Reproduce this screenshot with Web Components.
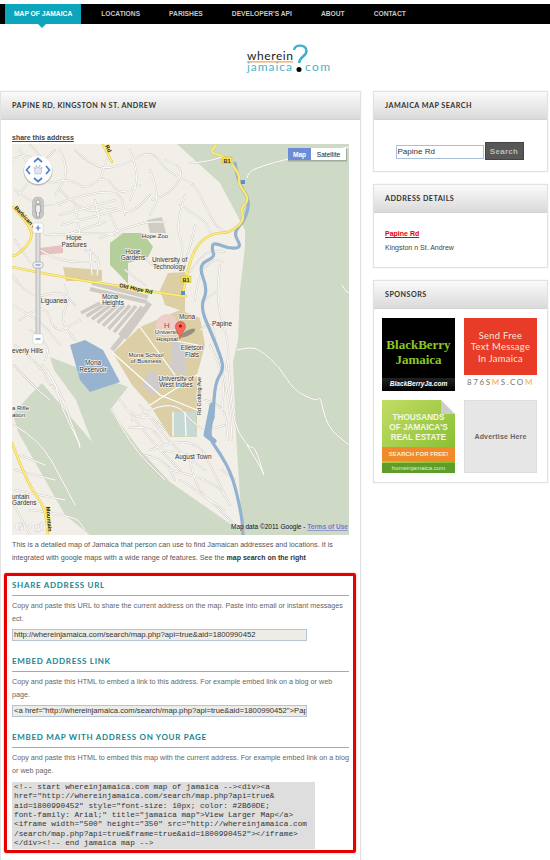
<!DOCTYPE html>
<html>
<head>
<meta charset="utf-8">
<title>Where in Jamaica</title>
<style>
html, body { margin:0; padding:0; background:#fff; }
body { font-family:"Liberation Sans", Arial, sans-serif; width:550px; height:860px; overflow:hidden; }
.columns { display:grid; grid-template-columns:361px 175px; column-gap:12px; align-items:start; margin-top:18px; }
.side { display:flex; flex-direction:column; gap:12px; }
</style>
</head>
<body>
<wj-nav></wj-nav>
<wj-logo></wj-logo>
<div class="columns">
  <wj-panel>
    <span slot="title">PAPINE RD, KINGSTON N ST. ANDREW</span>
    <wj-address></wj-address>
  </wj-panel>
  <div class="side">
    <wj-panel><span slot="title">JAMAICA MAP SEARCH</span><wj-search></wj-search></wj-panel>
    <wj-panel><span slot="title">ADDRESS DETAILS</span><wj-details></wj-details></wj-panel>
    <wj-panel><span slot="title">SPONSORS</span><wj-sponsors></wj-sponsors></wj-panel>
  </div>
</div>

<script>
const navTemplate = document.createElement('template')
navTemplate.innerHTML = `
<style>
:host { display:block; margin-top:4px; height:20px; background:#000; padding-left:5px; position:relative; }
nav { display:flex; gap:11px; height:20px; }
a { display:flex; align-items:center; padding:0 9px; color:#c9c9c9; font:bold 6.7px/20px "Liberation Sans", Arial, sans-serif; white-space:nowrap; text-decoration:none; }
a.on { background:#0ca5bb; color:#fff; position:relative; }
a.on::after { content:""; position:absolute; left:33px; top:20px; border:4px solid transparent; border-top-color:#0ca5bb; border-bottom:0; }
</style>
<nav>
<a class="on" href="#">MAP OF JAMAICA</a>
<a href="#">LOCATIONS</a>
<a href="#">PARISHES</a>
<a href="#">DEVELOPER'S API</a>
<a href="#">ABOUT</a>
<a href="#">CONTACT</a>
</nav>
`
customElements.define('wj-nav', class extends HTMLElement {
    constructor() {
        super()
        this.attachShadow({ mode: 'open' }).appendChild(navTemplate.content.cloneNode(true))
    }
})

const logoTemplate = document.createElement('template')
logoTemplate.innerHTML = `
<style>
:host { display:flex; padding:21px 0 0 247px; height:28px; }
svg { display:block; width:84px; height:30px; overflow:visible; }
text { font-family:Lato, "Liberation Sans", sans-serif; }
</style>
<svg viewBox="0 0 84 30">
  <text x="0" y="15" font-size="12" fill="#222" textLength="46">wherein</text>
  <rect x="0" y="16.4" width="46" height="1" fill="#f08a2c"/>
  <text x="0" y="25.500" font-size="12" fill="#4eb3c6" textLength="45">jamaica</text>
  <text x="58" y="25.500" font-size="12" fill="#4eb3c6" textLength="25">com</text>
  <path d="M47 5 C48 -1 59 -1 59.500 6 C59.800 11 52.500 11.500 52 18" fill="none" stroke="#3fb0c8" stroke-width="2.400"/>
  <circle cx="52" cy="24.500" r="2.500" fill="#000"/>
</svg>
`
customElements.define('wj-logo', class extends HTMLElement {
    constructor() {
        super()
        this.attachShadow({ mode: 'open' }).appendChild(logoTemplate.content.cloneNode(true))
    }
})

const panelTemplate = document.createElement('template')
panelTemplate.innerHTML = `
<style>
:host { display:block; border:1px solid #e2e2e2; box-shadow:0 0 1px #ddd; background:#fff; }
header { height:27px; padding-left:11px; display:flex; align-items:center; background:linear-gradient(#fafafa,#dadada); border-bottom:1px solid #d2d2d2;
  font:bold 7.2px Lato, "Liberation Sans", sans-serif; letter-spacing:.45px; color:#333; }
</style>
<header><slot name="title"></slot></header>
<slot></slot>
`
customElements.define('wj-panel', class extends HTMLElement {
    constructor() {
        super()
        this.attachShadow({ mode: 'open' }).appendChild(panelTemplate.content.cloneNode(true))
    }
})

const addressTemplate = document.createElement('template')
addressTemplate.innerHTML = `
<style>
:host { display:block; padding:12px 11px 0; font:7.2px/13.4px "Liberation Sans", Arial, sans-serif; color:#555; height:760px; box-sizing:border-box; }
.share { display:block; font-weight:bold; font-size:7px; color:#444; text-decoration:underline; line-height:11px; height:12px; }
p { margin:3px 0 0; width:337px; height:35px; }
p b { color:#333; font-size:7px; }
.box { margin:0 -8px; border:3px solid #e70000; border-radius:2px; padding:4px 4px 0 5px; width:352px; height:280px; box-sizing:border-box; box-shadow:0 0 2px #f99; }
</style>
<a class="share">share this address</a>
<wj-map></wj-map>
<p>This is a detailed map of Jamaica that person can use to find Jamaican addresses and locations. It is integrated with google maps with a wide range of features. See the <b>map search on the right</b></p>
<div class="box">
<wj-copy heading="SHARE ADDRESS URL" text="Copy and paste this URL to share the current address on the map. Paste into email or instant messages ect." value="http://whereinjamaica.com/search/map.php?api=true&amp;aid=1800990452"></wj-copy>
<wj-copy heading="EMBED ADDRESS LINK" text="Copy and paste this HTML to embed a link to this address. For example embed link on a blog or web page." value='&lt;a href="http://whereinjamaica.com/search/map.php?api=true&amp;aid=1800990452"&gt;Papine Rd&lt;/a&gt;'></wj-copy>
<wj-copy heading="EMBED MAP WITH ADDRESS ON YOUR PAGE" text="Copy and paste this HTML to embed this map with the current address. For example embed link on a blog or web page." code='&lt;!-- start whereinjamaica.com map of jamaica --&gt;&lt;div&gt;&lt;a
href="http://whereinjamaica.com/search/map.php?api=true&amp;
aid=1800990452" style="font-size: 10px; color: #2B60DE;
font-family: Arial;" title="jamaica map"&gt;View Larger Map&lt;/a&gt;
&lt;iframe width="500" height="350" src="http://whereinjamaica.com
/search/map.php?api=true&amp;frame=true&amp;aid=1800990452"&gt;&lt;/iframe&gt;
&lt;/div&gt;&lt;!-- end jamaica map --&gt;'></wj-copy>
</div>
`
customElements.define('wj-address', class extends HTMLElement {
    constructor() {
        super()
        this.attachShadow({ mode: 'open' }).appendChild(addressTemplate.content.cloneNode(true))
    }
})

const copyTemplate = document.createElement('template')
copyTemplate.innerHTML = `
<style>
:host { display:block; font:7.2px/13.4px "Liberation Sans", Arial, sans-serif; color:#666; height:76px; }
:host(:last-child) { height:auto; }
h3 { margin:0; font:bold 8px/11px Lato, "Liberation Sans", sans-serif; letter-spacing:.7px; color:#17868f; padding-bottom:4px; border-bottom:1px solid #aaa; height:11px; }
p { margin:3px 0 0; width:338px; height:27px; }
.value { margin-top:3px; width:295px; height:12px; box-sizing:border-box; background:#eeece6; border:1px solid #b4c4d4; padding:0 1px; font:7.7px/10px "Liberation Sans", Arial, sans-serif; color:#333; white-space:nowrap; overflow:hidden; }
pre { margin:4px 0 0; width:303px; height:67px; box-sizing:border-box; background:#dedede; padding:1px 2px; font:7.75px/9.35px "Liberation Mono", monospace; color:#333; overflow:hidden; }
</style>
<h3></h3>
<p></p>
`
customElements.define('wj-copy', class extends HTMLElement {
    constructor() {
        super()
        this.attachShadow({ mode: 'open' }).appendChild(copyTemplate.content.cloneNode(true))
        this.shadowRoot.querySelector('h3').textContent = this.getAttribute('heading')
        this.shadowRoot.querySelector('p').textContent = this.getAttribute('text')
        if (this.hasAttribute('code')) {
            const pre = document.createElement('pre')
            pre.textContent = this.getAttribute('code')
            this.shadowRoot.append(pre)
        } else {
            const value = document.createElement('div')
            value.className = 'value'
            value.textContent = this.getAttribute('value')
            this.shadowRoot.append(value)
        }
    }
})

// polylines to rounded curves, the map numbers are page pixels
function smooth(list) {
    return list.map(line => line.trim().split(/\s+/).map(p => p.split(',').map(Number))).map(pts => {
        let d = `M${pts[0][0]} ${pts[0][1]}`
        for (let i = 1; i < pts.length - 1; i++) {
            const mx = (pts[i][0] + pts[i + 1][0]) / 2
            const my = (pts[i][1] + pts[i + 1][1]) / 2
            d += ` Q${pts[i][0]} ${pts[i][1]} ${mx} ${my}`
        }
        const last = pts[pts.length - 1]
        return d + ` L${last[0]} ${last[1]}`
    }).join(' ')
}

const roads = smooth([
 '12,160 25,152 40,165 55,150', '30,145 50,165 45,185 70,178 85,190 105,175 120,195 140,185',
 '60,190 85,215 110,205 130,215 150,195', '75,150 95,170 125,165 150,150 165,168 170,172 185,180 195,185 205,205 215,225 225,232',
 '55,205 80,195 120,190 125,215', '60,215 115,200', '62,225 118,210', '65,235 105,222', '45,235 100,232 115,235',
 '15,190 35,205 60,205', '15,240 30,262', '12,275 30,300 60,290 75,305', '20,320 45,300 55,335 80,320',
 '90,250 92,275', '85,250 100,255 97,275', '12,305 40,320 60,345', '15,345 40,365 50,385', '14,365 32,385 50,400',
 '100,238 140,222 165,222', '152,200 170,195 185,170 165,160', '180,205 205,220 210,232',
 '190,163 205,162 222,157', '247,178 248,172 262,166 287,159 320,152 349,147',
 '190,272 205,250 225,252', '195,300 198,275 215,258 222,262', '220,265 215,300 230,345 226,370',
 '205,300 218,290', '200,330 212,320 215,340', '237,350 250,347 260,350 280,367 293,390 318,402 320,395 327,427 349,445',
 '228,360 232,410 238,433 250,448 255,447 265,478 262,470 255,458 247,445', '342,285 347,293 349,292',
 '132,420 170,395 200,432 225,425', '112,410 130,445 165,480', '120,400 150,440 180,470', '140,405 170,445 205,470',
 '150,450 175,440 200,445 210,465 225,495', '170,470 215,480 230,505', '190,460 195,490 225,510', '222,470 235,480',
 '125,408 140,420 150,415 165,430', '130,428 150,425 165,445', '145,455 165,460 175,480', '160,450 190,455',
 '205,400 225,405 228,440', '210,345 225,375 222,410', '216,345 230,400 232,440', '180,480 205,495 235,525',
 '42,365 55,380 62,410 78,440 80,448', '47,370 62,395 70,420 80,445', '52,385 65,405',
 '14,425 40,440 62,480 75,505', '20,455 45,465', '15,470 55,480', '15,490 65,500', '30,510 75,515 85,530', '14,505 30,535',
 '20,150 35,175 18,195', '60,150 70,170 55,195', '130,150 140,175 130,200', '110,150 100,180', '150,170 160,195 150,215',
 '95,200 100,225', '75,205 80,235', '110,215 120,235', '40,250 60,262 95,262', '65,285 70,300 60,320 75,340',
 '30,330 50,345 45,360', '125,270 145,285', '140,255 160,270', '185,195 175,225 185,250 175,270', '195,225 190,250 180,272'
])
const casing = '#d2cec5'
const fan = []
for (let i = 0; i < 9; i++) {
    fan.push(`M${100 + i * 6} ${303 + i * .5} L${81 + i * 5.5} ${313 + i * 3.2}`)
}
const river = smooth(['235,163 238,183 250,200 245,220 233,233 242,247 230,249 213,242 212,250 215,257 198,265 208,290 200,307 213,337 222,360 223,370 215,383 213,417'])
const riverLow = smooth(['213,417 207,435 220,453 233,477 242,517 243,535'])
const yellow = smooth(['12,267 60,277 120,286 180,296 186,296', '183,293 190,253 210,233 230,233 245,220 240,208 250,200 238,183 240,177 232,163 222,155 210,153 216,145',
 '13,207 33,228 30,243 17,255 12,256', '103,145 112,162', '12,443 27,483 45,507 48,535'])

const mapTemplate = document.createElement('template')
mapTemplate.innerHTML = `
<style>
:host { display:block; width:337px; height:391px; }
svg { display:block; }
text { font-family:"Liberation Sans", Arial, sans-serif; font-size:6.4px; fill:#333; paint-order:stroke; stroke:#f4f2ec; stroke-width:1.4px; }
.plain { stroke:none; }
.road { font-size:5.6px; font-weight:bold; stroke:#fdee7d; fill:#222; }
</style>
<svg width="337" height="391" viewBox="12 144 337 391">
  <clipPath id="clip"><rect x="12" y="144" width="337" height="391"/></clipPath>
  <g clip-path="url(#clip)">
  <rect x="12" y="144" width="337" height="391" fill="#f2efe9"/>
  <path d="M177 144 L220 183 L245 230 L245 247 L240 290 L238 340 L233 362 L236 433 L242 530 L242 535 L349 535 L349 144Z" fill="#cfdac6"/>
  <path d="M50 357 L128 387 L110 410 L140 450 L170 482 L242 532 L242 535 L90 535 L65 515 L18 432 L13 414 L30 395 L42 383 L92 442 L76 400 L54 370Z" fill="#cfdac6"/>
  <path d="M113 353 L140 327 L180 310 L200 318 L205 345 L197 375 L197 437 L170 437 L150 405 L132 385Z" fill="#dccfa5"/>
  <path d="M160 290 L168 273 L185 272 L185 296 L185 312 L165 305Z" fill="#dccfa5"/>
  <path d="M63 267 L102 270 L102 281 L66 281Z" fill="#dccfa5"/>
  <path d="M40 248 L63 245 L63 253 L40 255Z" fill="#e7c0bf"/>
  <path d="M147 220 L162 217 L166 233 L150 233Z" fill="#cfccc6"/>
  <path d="M110 243 L123 233 L143 233 L153 247 L148 257 L128 263 L128 284 L120 275 L110 265Z" fill="#b5cf9b"/>
  <circle cx="167" cy="325" r="11" fill="#eccfc9"/>
  <path d="M172 338 L185 345 L186 375 L170 370Z M150 370 L165 378 L155 396 L142 385Z" fill="#cfcccb"/>
  <path d="M173 412 L195 412 L197 437 L173 436Z" fill="#c6d9d4"/>
  <path d="M70 345 L85 340 L103 350 L120 382 L90 392 L80 380Z" fill="#97b3cf"/>
  <path d="M92 283 L148 297 M90 289 L147 302" stroke="#cfcbc4" stroke-width="4" fill="none"/>
  <path d="${fan.join(' ')}" stroke="#cfcbc4" stroke-width="3.6" fill="none"/>
  <path d="M150 303 L112 350" stroke="#cfcbc4" stroke-width="5" fill="none"/>
  <g fill="none" stroke-linejoin="round" stroke-linecap="round">
    <path d="${roads}" stroke="${casing}" stroke-width="1.9"/>
    <path d="${roads}" stroke="#fff" stroke-width="1"/>
    <path d="M113 353 L160 395 M140 327 L175 375 M150 405 L197 375 M170 340 L198 345 M160 395 L197 410 M173 412 L173 436 M185 412 L186 436" stroke="#fff" stroke-width="1.2"/>
    <path d="${river}" stroke="#93b2d0" stroke-width="3.2"/>
    <path d="${riverLow}" stroke="#93b2d0" stroke-width="3.2"/>
    <path d="M212 405 L206 435 L214 441" stroke="#93b2d0" stroke-width="5"/>
    <path d="${yellow}" stroke="#e0c85a" stroke-width="2.6"/>
    <path d="${yellow}" stroke="#fdee7d" stroke-width="1.6"/>
  </g>
  <g>
    <text x="74" y="240" text-anchor="middle">Hope</text><text x="74" y="247" text-anchor="middle">Pastures</text>
    <text x="155" y="238" text-anchor="middle" style="font-size:6px">Hope Zoo</text>
    <text x="133" y="254" text-anchor="middle">Hope</text><text x="133" y="260" text-anchor="middle">Gardens</text>
    <text x="152" y="262">University of</text><text x="153" y="269">Technology</text>
    <text x="119" y="287" transform="rotate(12 119 287)" class="road" style="stroke:#fdee7d">Old Hope Rd</text>
    <text x="110" y="299" text-anchor="middle">Mona</text><text x="113" y="305" text-anchor="middle">Heights</text>
    <text x="54" y="303" text-anchor="middle">Liguanea</text>
    <text x="12" y="353">everly Hills</text>
    <text x="167" y="328" text-anchor="middle" style="font-size:8px;fill:#c3413f;stroke:none">H</text>
    <text x="168" y="334" text-anchor="middle" style="font-size:6px">University</text><text x="167" y="341" text-anchor="middle" style="font-size:6px">Hospital</text>
    <text x="146" y="357" text-anchor="middle" style="font-size:6px">Mona School</text><text x="146" y="363" text-anchor="middle" style="font-size:6px">of Business</text>
    <text x="187" y="319" text-anchor="middle">Mona</text>
    <text x="192" y="350" text-anchor="middle">Elletson</text><text x="192" y="357" text-anchor="middle">Flats</text>
    <text x="222" y="326" text-anchor="middle">Papine</text>
    <text x="93" y="365" text-anchor="middle">Mona</text><text x="93" y="372" text-anchor="middle">Reservoir</text>
    <text x="176" y="381" text-anchor="middle">University of</text><text x="176" y="387" text-anchor="middle">West Indies</text>
    <text x="12" y="410" style="font-size:6px">a Rifle</text><text x="12" y="417" style="font-size:6px">ation</text>
    <text x="12" y="499">untain</text><text x="12" y="505">Gardens</text>
    <text x="175" y="459">August Town</text>
    <text x="201" y="415" transform="rotate(-90 201 415)" style="font-size:5.5px">Rd Golding Ave</text>
    <text x="14" y="208" transform="rotate(47 14 208)" class="road">Barbican Rd</text>
    <text x="46" y="507" transform="rotate(85 46 507)" class="road">Mountain</text>
    <text x="105" y="146" transform="rotate(65 105 146)" class="road">Rd</text>
  </g>
  <g>
    <rect x="222" y="157" width="10" height="6.500" fill="#f9e24c" stroke="#d8c33c" stroke-width=".6"/><text x="227" y="162.500" text-anchor="middle" class="plain" style="font-size:5.6px;font-weight:bold">B1</text>
    <rect x="181" y="276" width="10" height="6.500" fill="#f9e24c" stroke="#d8c33c" stroke-width=".6"/><text x="186" y="281.500" text-anchor="middle" class="plain" style="font-size:5.6px;font-weight:bold">B1</text>
    <rect x="241" y="180" width="4" height="4" fill="#5c90d0"/><rect x="181" y="291" width="4" height="4" fill="#5c90d0"/>
  </g>
  <ellipse cx="188" cy="333" rx="8" ry="2.600" transform="rotate(-28 188 333)" fill="#666" opacity=".6"/>
  <path d="M180 339 C179 333 175.400 331 175.400 326.500 A5 5 0 0 1 185.400 326.500 C185.400 331 181 333 180 339Z" fill="#f76a5e" stroke="#b73c32" stroke-width=".5"/>
  <circle cx="180.400" cy="326" r="1.600" fill="#8e2018"/>
  <text x="15" y="530" class="plain" style="font-size:11px;font-weight:bold;fill:#fff;stroke:#aaa;stroke-width:.6px;opacity:.75;font-family:'Liberation Serif',serif">Google</text>
  <text x="231" y="529" class="plain" style="font-size:6.500px;fill:#111">Map data ©2011 Google - <tspan style="fill:#7777cc;text-decoration:underline;font-weight:bold">Terms of Use</tspan></text>

  <!-- pan control -->
  <circle cx="38" cy="171" r="14.500" fill="#888" opacity=".5"/>
  <circle cx="38" cy="170" r="14" fill="#fff"/>
  <path d="M34 162 L38 158.500 L42 162 M34 178 L38 181.500 L42 178 M30 166 L26.500 170 L30 174 M46 166 L49.500 170 L46 174" fill="none" stroke="#4f7fd0" stroke-width="1.700"/>
  <path d="M35 174 L34 167 L36 169 L36 165 L38 168 L40 165 L40 169 L42 167 L41 174Z" fill="#dfe6f3" stroke="#9aa9c0" stroke-width=".5"/>
  <!-- pegman and zoom slider -->
  <rect x="32.500" y="197" width="11" height="22" rx="5" fill="#c8c8c8" stroke="#aaa" stroke-width=".5"/>
  <circle cx="38" cy="202" r="2" fill="#f2f2f2" stroke="#777" stroke-width=".5"/>
  <path d="M35.500 205 H40.500 V212 H39.500 V217 H36.500 V212 H35.500Z" fill="#eee" stroke="#777" stroke-width=".5"/>
  <rect x="36" y="228" width="4" height="112" fill="#ddd" stroke="#999" stroke-width=".6"/>
  <rect x="33" y="223" width="10" height="10" rx="1.500" fill="#fff" stroke="#bbb" stroke-width=".4"/>
  <path d="M35.500 228 H40.500 M38 225.500 V230.500" stroke="#4f7fd0" stroke-width="1.200"/>
  <rect x="33" y="262" width="10" height="6" rx="2" fill="#f1f1f1" stroke="#888" stroke-width=".5"/>
  <path d="M35.500 265 H40.500" stroke="#4f7fd0" stroke-width="1"/>
  <rect x="33" y="334" width="10" height="10" rx="1.500" fill="#fff" stroke="#bbb" stroke-width=".4"/>
  <path d="M35.500 339 H40.500" stroke="#4f7fd0" stroke-width="1.200"/>
  <!-- map type -->
  <rect x="288" y="149" width="59" height="12.500" fill="#777" opacity=".5"/>
  <rect x="288" y="148" width="23" height="12" fill="#6b8cd6"/>
  <rect x="311" y="148" width="35" height="12" fill="#fff"/>
  <text x="299.500" y="156.500" text-anchor="middle" class="plain" style="font-size:6.600px;font-weight:bold;fill:#fff">Map</text>
  <text x="328.500" y="156.500" text-anchor="middle" class="plain" style="font-size:6.600px;fill:#222">Satellite</text>
  </g>
</svg>
`
customElements.define('wj-map', class extends HTMLElement {
    constructor() {
        super()
        this.attachShadow({ mode: 'open' }).appendChild(mapTemplate.content.cloneNode(true))
    }
})

const searchTemplate = document.createElement('template')
searchTemplate.innerHTML = `
<style>
:host { display:flex; justify-content:center; padding:22px 2px 11px 0; gap:1px; }
.field { width:88px; height:14px; margin-top:3px; box-sizing:border-box; border:1px solid #a9c0d8; padding-left:1px; font:8px/12px "Liberation Sans", Arial, sans-serif; color:#333; }
button { width:39px; height:18px; padding:0; border:1px solid #444; background:#575757; color:#bbb; font:bold 8px "Liberation Sans", Arial, sans-serif; letter-spacing:.3px; }
</style>
<div class="field">Papine Rd</div>
<button>Search</button>
`
customElements.define('wj-search', class extends HTMLElement {
    constructor() {
        super()
        this.attachShadow({ mode: 'open' }).appendChild(searchTemplate.content.cloneNode(true))
    }
})

const detailsTemplate = document.createElement('template')
detailsTemplate.innerHTML = `
<style>
:host { display:block; padding:14px 11px 12px; font:7px/14px "Liberation Sans", Arial, sans-serif; color:#444; }
a { display:block; font-weight:bold; color:#e8000b; text-decoration:underline; }
</style>
<a>Papine Rd</a>
<div>Kingston n St. Andrew</div>
`
customElements.define('wj-details', class extends HTMLElement {
    constructor() {
        super()
        this.attachShadow({ mode: 'open' }).appendChild(detailsTemplate.content.cloneNode(true))
    }
})

const sponsorsTemplate = document.createElement('template')
sponsorsTemplate.innerHTML = `
<style>
:host { display:grid; grid-template-columns:73px 73px; gap:9px; padding:9px 0 9px 8px; font-family:"Liberation Sans", Arial, sans-serif; }
.tile { width:73px; height:73px; box-sizing:border-box; overflow:hidden; display:flex; flex-direction:column; text-align:center; }
.bb { background:#000; color:#8cc820; font:bold 13px/15px "Liberation Serif", serif; padding-top:19px; }
.bb small { margin-top:auto; display:block; height:13px; color:#fff; font:italic bold 6.6px/12px "Liberation Sans", sans-serif; background:linear-gradient(#222,#000); }
.sms { background:#fff; }
.sms div { background:#e83c28; height:57px; color:#f7e6d8; font:9.4px/11.4px Lato, "Liberation Sans", sans-serif; letter-spacing:.3px; padding-top:12px; box-sizing:border-box; }
.sms span { font:8px/15px Lato, "Liberation Sans", sans-serif; letter-spacing:1.6px; color:#777; white-space:nowrap; }
.sms i { color:#f2a93a; font-style:normal; }
.home { background:linear-gradient(135deg,#c2dd63,#7fb92c); color:#f4f8e4; font:bold 8.2px/10px "Liberation Sans", Arial, sans-serif; padding-top:13px; position:relative; }
.home::before { content:""; position:absolute; right:0; top:0; border-style:solid; border-width:0 14px 14px 0; border-color:#fff #fff #ccc #ccc; }
.home b { display:block; margin-top:4px; height:14px; background:#f08a2a; font:bold 6px/14px "Liberation Sans", Arial, sans-serif; color:#fdf0cc; }
.home small { display:block; background:#5e9d2a; margin-top:2px; height:10px; font:6px/10px "Liberation Sans", Arial, sans-serif; color:#dff0c4; }
.ad { background:#e6e6e6; border:1px solid #ddd; justify-content:center; color:#666; font:bold 7px "Liberation Sans", Arial, sans-serif; letter-spacing:.2px; }
</style>
<div class="tile bb">BlackBerry<br>Jamaica<small>BlackBerryJa.com</small></div>
<div class="tile sms"><div>Send Free<br>Text Message<br>In Jamaica</div><span>876S<i>M</i>S.CO<i>M</i></span></div>
<div class="tile home">THOUSANDS<br>OF JAMAICA'S<br>REAL ESTATE<b>SEARCH FOR FREE!</b><small>homeinjamaica.com</small></div>
<div class="tile ad">Advertise Here</div>
`
customElements.define('wj-sponsors', class extends HTMLElement {
    constructor() {
        super()
        this.attachShadow({ mode: 'open' }).appendChild(sponsorsTemplate.content.cloneNode(true))
    }
})
</script>
</body>
</html>
